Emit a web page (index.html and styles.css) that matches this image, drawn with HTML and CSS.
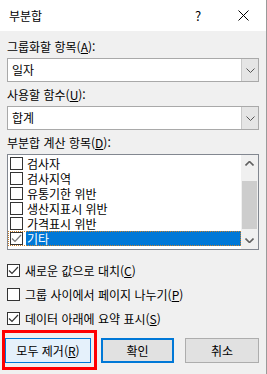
FILE: index.html
```html
<!DOCTYPE html>
<html lang="ko">
<head>
  <meta charset="UTF-8" />
  <meta name="viewport" content="width=device-width, initial-scale=1.0"/>
  <title>부분합</title>
  <link rel="stylesheet" href="styles.css">
</head>
<body>

  <div class="dialog">
    <div class="titlebar">
      <span class="title">부분합</span>
      <span class="help">?</span>
      <span class="close">
        <svg width="11" height="11" viewBox="0 0 11 11"><path d="M0.5 0.5 L10.5 10.5 M10.5 0.5 L0.5 10.5" stroke="#000" stroke-width="1" fill="none"/></svg>
      </span>
    </div>

    <div class="panel">
      <div class="label">그룹화할 항목(<u>A</u>):</div>
      <div class="combo">
        <span class="combo-text">일자</span>
        <span class="combo-btn">
          <svg width="9" height="5" viewBox="0 0 9 5"><path d="M0.5 0.5 L4.5 4.5 L8.5 0.5" stroke="#555" stroke-width="1" fill="none"/></svg>
        </span>
      </div>

      <div class="label">사용할 함수(<u>U</u>):</div>
      <div class="combo">
        <span class="combo-text">합계</span>
        <span class="combo-btn">
          <svg width="9" height="5" viewBox="0 0 9 5"><path d="M0.5 0.5 L4.5 4.5 L8.5 0.5" stroke="#555" stroke-width="1" fill="none"/></svg>
        </span>
      </div>

      <div class="label">부분합 계산 항목(<u>D</u>):</div>
      <div class="listbox">
        <div class="items">
          <div class="item"><span class="box"></span><span class="item-text">검사자</span></div>
          <div class="item"><span class="box"></span><span class="item-text">검사지역</span></div>
          <div class="item"><span class="box"></span><span class="item-text">유통기한 위반</span></div>
          <div class="item"><span class="box"></span><span class="item-text">생산지표시 위반</span></div>
          <div class="item"><span class="box"></span><span class="item-text">가격표시 위반</span></div>
          <div class="item selected">
            <span class="box">
              <svg width="11" height="11" viewBox="0 0 11 11"><path d="M1 5.5 L4 8.5 L10 2" stroke="#777" stroke-width="1.2" fill="none"/></svg>
            </span>
            <span class="item-text">기타</span>
          </div>
        </div>
        <div class="scrollbar">
          <span class="arrow">
            <svg width="9" height="5" viewBox="0 0 9 5"><path d="M0.5 4.5 L4.5 0.5 L8.5 4.5" stroke="#606060" stroke-width="1.6" fill="none"/></svg>
          </span>
          <span class="track"><span class="thumb"></span></span>
          <span class="arrow">
            <svg width="9" height="5" viewBox="0 0 9 5"><path d="M0.5 0.5 L4.5 4.5 L8.5 0.5" stroke="#606060" stroke-width="1.6" fill="none"/></svg>
          </span>
        </div>
      </div>

      <div class="options">
        <div class="option">
          <span class="box">
            <svg width="11" height="11" viewBox="0 0 11 11"><path d="M1 5.5 L4 8.5 L10 2" stroke="#333" stroke-width="1.2" fill="none"/></svg>
          </span>
          <span>새로운 값으로 대치(<u>C</u>)</span>
        </div>
        <div class="option">
          <span class="box"></span>
          <span>그룹 사이에서 페이지 나누기(<u>P</u>)</span>
        </div>
        <div class="option">
          <span class="box">
            <svg width="11" height="11" viewBox="0 0 11 11"><path d="M1 5.5 L4 8.5 L10 2" stroke="#333" stroke-width="1.2" fill="none"/></svg>
          </span>
          <span>데이터 아래에 요약 표시(<u>S</u>)</span>
        </div>
      </div>

      <div class="buttons">
        <button class="btn btn-remove">모두 제거(<u>R</u>)</button>
        <button class="btn btn-ok">확인</button>
        <button class="btn btn-cancel">취소</button>
      </div>
    </div>
  </div>

</body>
</html>
```

FILE: styles.css
```css
body {
  margin: 0;
  background: #f0f0f0;
  font-family: "Noto Sans CJK KR", "Noto Sans", sans-serif;
  font-size: 12px;
  color: #000;
  overflow: hidden;
}

.dialog {
  width: 266px;
  height: 374px;
  background: #f0f0f0;
  border-right: 1px solid #9a9a9a;
}

.titlebar {
  height: 31px;
  background: #fff;
  display: flex;
  align-items: center;
}

.title {
  padding-left: 9px;
  flex: 1;
  font-size: 12px;
}

.help {
  width: 46px;
  text-align: center;
  font-size: 13px;
  margin-right: -1px;
}

.close {
  width: 46px;
  display: flex;
  justify-content: center;
}

.panel {
  padding: 8px 7px 0 7px;
}

.label {
  height: 16px;
  line-height: 16px;
  margin-bottom: 3px;
}

u {
  text-underline-offset: 1px;
}

.combo {
  height: 22px;
  border: 1px solid #a9a9a9;
  background: #fff;
  display: flex;
  margin-bottom: 5px;
}

.combo-text {
  flex: 1;
  padding-left: 4px;
  line-height: 22px;
}

.combo-btn {
  width: 16px;
  border-left: 1px solid #c8c8c8;
  background: #e5e5e5;
  display: flex;
  align-items: center;
  justify-content: center;
}

.listbox {
  height: 94px;
  border: 1px solid #828790;
  background: #fff;
  display: flex;
}

.items {
  flex: 1;
  padding-top: 1px;
}

.item {
  height: 15px;
  display: flex;
  align-items: center;
  padding-left: 2px;
}

.item .box {
  margin-right: 3px;
}

.item-text {
  height: 15px;
  line-height: 15px;
  padding: 0 1px;
  overflow: hidden;
}

.item.selected {
  outline: 1px dotted #c87f2a;
  outline-offset: -1px;
}

.item.selected .item-text {
  flex: 1;
  background: #0078d7;
  color: #fff;
}

.box {
  width: 11px;
  height: 11px;
  border: 1px solid #333;
  background: #fff;
  display: flex;
  flex-shrink: 0;
}

.scrollbar {
  width: 17px;
  background: #f0f0f0;
  display: flex;
  flex-direction: column;
}

.arrow {
  height: 17px;
  display: flex;
  align-items: center;
  justify-content: center;
}

.track {
  flex: 1;
  padding: 9px 1px 3px 1px;
  display: flex;
}

.thumb {
  flex: 1;
  background: #cdcdcd;
}

.options {
  padding-top: 8px;
}

.option {
  height: 24px;
  display: flex;
  align-items: center;
  gap: 5px;
}

.buttons {
  display: flex;
  margin-top: 8px;
  margin-left: -2px;
}

.btn {
  height: 25px;
  font-family: inherit;
  font-size: 12px;
  color: #000;
  background: #e1e1e1;
  border: 1px solid #adadad;
  padding: 0;
}

.btn-remove {
  width: 86px;
  background: #e5f1fb;
  border-color: #0078d7;
  position: relative;
}

.btn-remove::after {
  content: "";
  position: absolute;
  top: -9px;
  left: -4px;
  right: -7px;
  bottom: -8px;
  border: 3px solid #f00;
}

.btn-ok {
  width: 73px;
  margin-left: 10px;
  border: 2px solid #0078d7;
}

.btn-cancel {
  width: 74px;
  margin-left: 11px;
}
```
